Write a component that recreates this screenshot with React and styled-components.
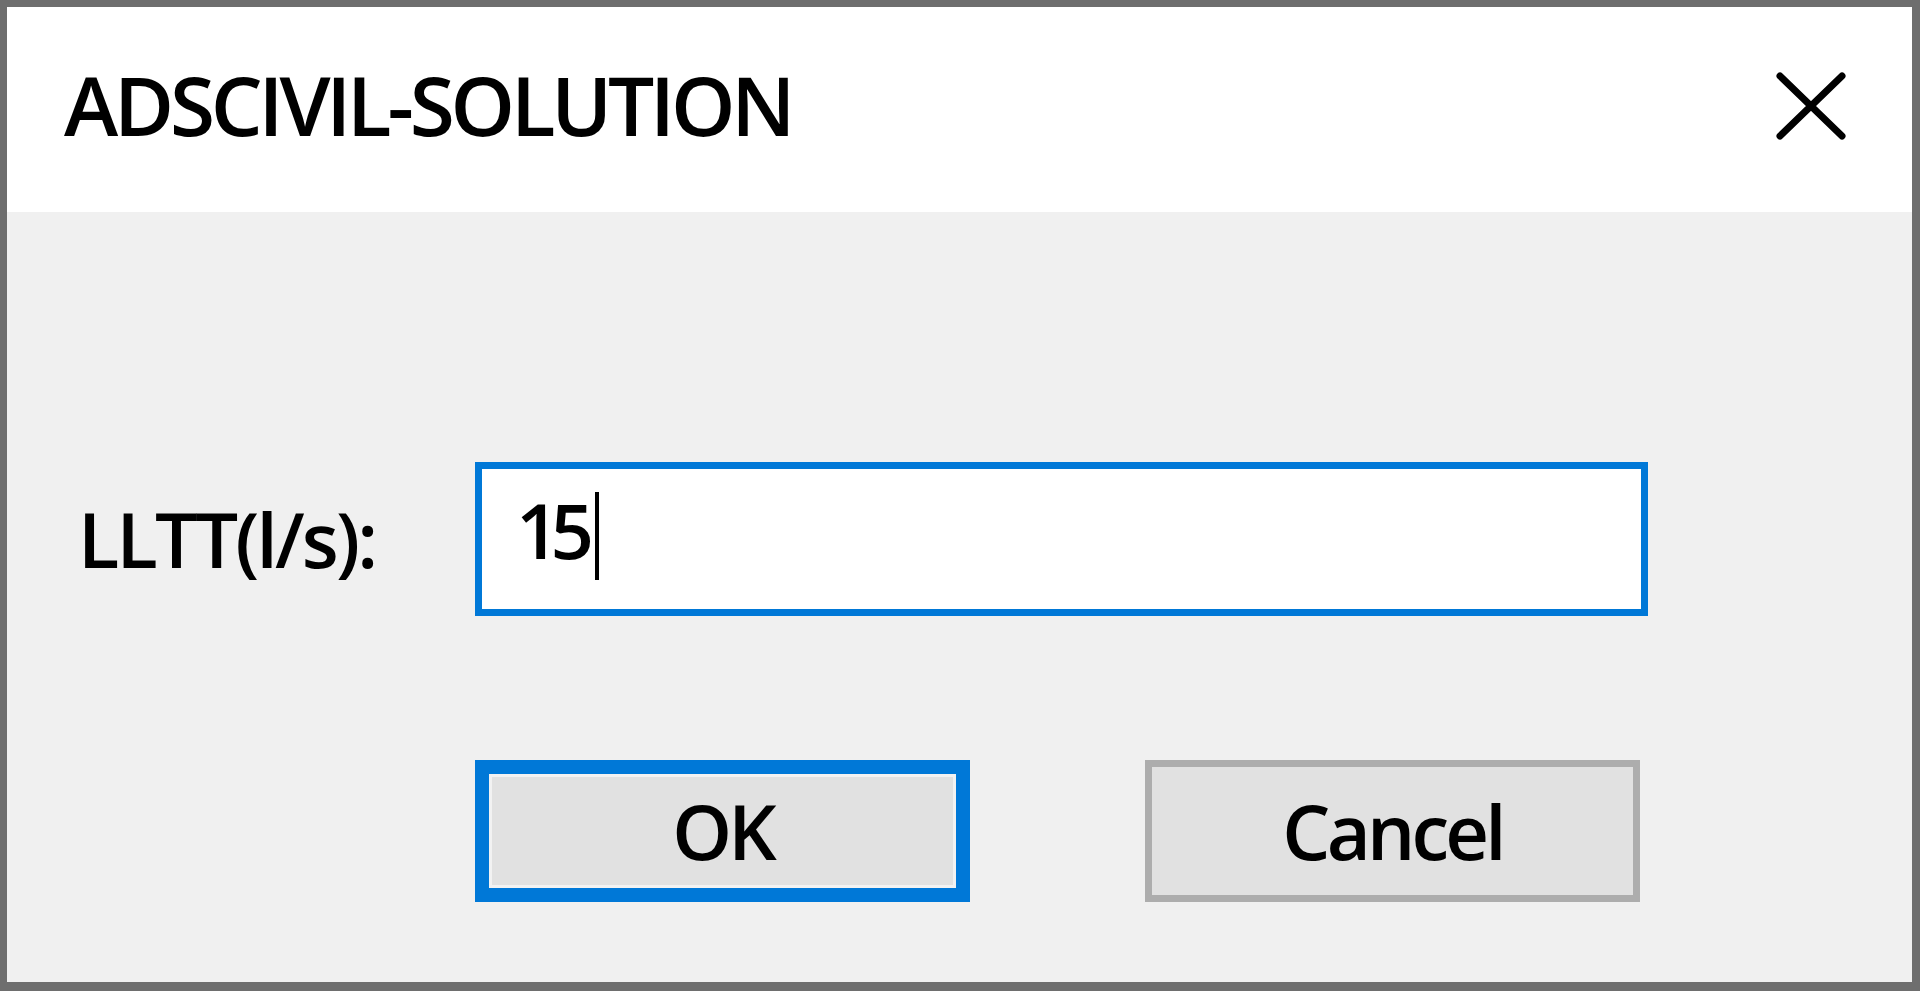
import React from "react";
import styled, { createGlobalStyle } from "styled-components";

const Global = createGlobalStyle`
  html, body { margin: 0; padding: 0; background: #6e6e6e; }
  #root { height: 991px; }
  * { box-sizing: border-box; }
`;

const Window = styled.div`
  width: 1920px;
  height: 991px;
  display: flex;
  flex-direction: column;
  border-style: solid;
  border-color: #6e6e6e;
  border-width: 7px 8px 9px 7px;
  font-family: "Open Sans", "Noto Sans", sans-serif;
  font-weight: 600;
  color: #000;
`;

const TitleBar = styled.div`
  height: 205px;
  flex: none;
  background: #ffffff;
  display: flex;
  align-items: center;
  justify-content: space-between;
  padding: 0 65px 12px 57px;
`;

const Title = styled.div`
  font-size: 82px;
  line-height: 1;
  letter-spacing: -4.2px;
  white-space: nowrap;
`;

const CloseButton = styled.div`
  width: 72px;
  height: 70px;
  display: flex;
  margin-top: 4px;
`;

const Body = styled.div`
  flex: 1;
  background: #f0f0f0;
  display: flex;
  flex-direction: column;
  padding: 250px 0 0 71px;
`;

const FieldRow = styled.div`
  display: flex;
  align-items: center;
`;

const Label = styled.div`
  width: 397px;
  font-size: 76px;
  line-height: 1;
  letter-spacing: -2.8px;
  white-space: nowrap;
`;

const TextField = styled.div`
  width: 1173px;
  height: 154px;
  background: #ffffff;
  border: 7px solid #0078d7;
  display: flex;
  align-items: center;
  padding: 0 0 18px 34px;
`;

const Value = styled.span`
  font-size: 76px;
  line-height: 1;
  letter-spacing: -9px;
`;

const Caret = styled.span`
  display: inline-block;
  width: 4px;
  height: 88px;
  background: #000;
  margin: 0 0 0 10px;
  position: relative;
  top: 6px;
`;

const ButtonRow = styled.div`
  display: flex;
  gap: 175px;
  margin: 144px 0 0 397px;
`;

const Button = styled.div`
  width: 495px;
  height: 142px;
  background: #e1e1e1;
  display: flex;
  align-items: center;
  justify-content: center;
  font-size: 76px;
  line-height: 1;
  letter-spacing: -3.8px;
  border: ${(p) => (p.$default ? "14px solid #0078d7" : "7px solid #adadad")};
  box-shadow: ${(p) => (p.$default ? "inset 0 0 0 3px #f2f2f2" : "none")};
`;

export default function App() {
  return (
    <>
      <Global />
      <Window>
        <TitleBar>
          <Title>ADSCIVIL-SOLUTION</Title>
          <CloseButton>
            <svg width="72" height="70" viewBox="0 0 72 70">
              <path
                d="M5 5 L67 65 M67 5 L5 65"
                stroke="#000"
                strokeWidth="7"
                strokeLinecap="round"
                fill="none"
              />
            </svg>
          </CloseButton>
        </TitleBar>
        <Body>
          <FieldRow>
            <Label>LLTT(l/s):</Label>
            <TextField>
              <Value>15</Value>
              <Caret />
            </TextField>
          </FieldRow>
          <ButtonRow>
            <Button $default>OK</Button>
            <Button>Cancel</Button>
          </ButtonRow>
        </Body>
      </Window>
    </>
  );
}
